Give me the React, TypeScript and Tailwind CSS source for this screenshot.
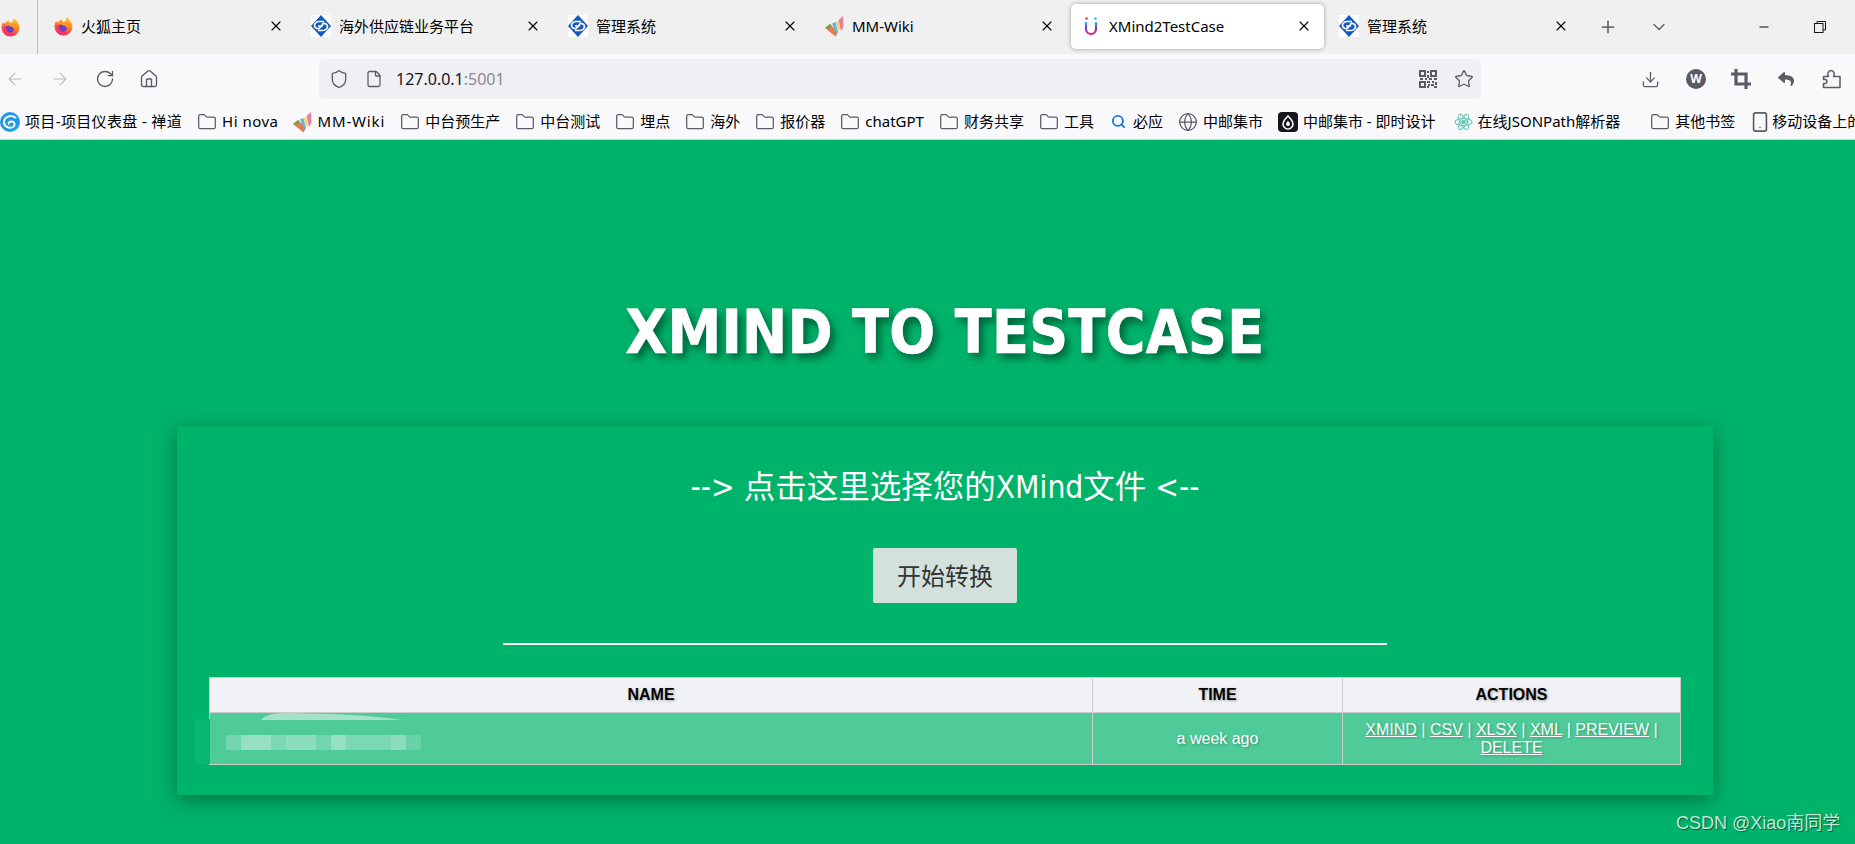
import {
  ArrowLeft,
  ArrowRight,
  ChevronDown,
  Download,
  File,
  Folder,
  Globe,
  Home,
  Minus,
  Plus,
  RotateCw,
  Search,
  Shield,
  Smartphone,
  Star,
  X,
} from "lucide-react";
import { FaReply } from "react-icons/fa";
import type { ReactNode } from "react";

function Fox({ id, size = 19 }: { id: string; size?: number }) {
  return (
    <svg width={size} height={size} viewBox="0 0 20 20" className="shrink-0">
      <defs>
        <linearGradient id={id} x1="0.7" y1="0" x2="0.3" y2="1">
          <stop offset="0" stopColor="#ffd02e" />
          <stop offset="0.4" stopColor="#ff8a22" />
          <stop offset="1" stopColor="#f0246e" />
        </linearGradient>
      </defs>
      <path d="M13 0c3 2 6 5 6.500 10a9.500 9.500 0 1 1-19 0c0-2 .6-4 1.500-5.500L4 6c1-2 2.500-3 4.500-3.500C8.500 4 9 5 10 5.500 12 5 13.500 3 13 0z" fill={`url(#${id})`} />
      <circle cx="9.500" cy="11" r="4.400" fill="#6c3bc8" />
      <path d="M5.500 8.500c1.500-1 3-1 4 .5 2 0 3.500.8 3.500 2.800 2-1.500 1.500-5-1-6.300-2.500-1-5.500 0-6.500 3z" fill="#ff9a2a" />
      <path d="M2.500 10c0 5 3.500 8 7.500 8s6-2 7-4c-2 2-5 3-8 1.500S5 12 5.500 8.500C4 8.500 3 9 2.500 10z" fill="#f4365c" />
    </svg>
  );
}

function Diamond() {
  return (
    <svg width="20" height="22" viewBox="0 0 20 22" className="shrink-0">
      <rect width="20" height="22" fill="#fff" />
      <path d="M10 0l10 11-10 11L0 11z" fill="#1458c0" />
      <path
        d="M13 6.500H8C5.500 6.500 3.500 8.500 3.500 10.500S6 14 8 13.500l2.500-2.500H7M7 15.500h5c2.500 0 4.500-2 4.500-4s-2.500-3.500-4.500-3l-1.500 3"
        fill="none"
        stroke="#fff"
        strokeWidth="1.7"
      />
    </svg>
  );
}

function MMLogo() {
  return (
    <svg width="19" height="22" viewBox="0 0 19 22" className="shrink-0">
      <path d="M0 13l5-4 8 8-2.500 4.500z" fill="#ea7a4d" />
      <path d="M0 13l5-4 1.500 1.500-3 3.500z" fill="#6da84f" />
      <path d="M7 8.500l3.500-1.500 2.500 10-2 1z" fill="#62b6e0" />
      <path d="M11 7l2-1 2 7-1.500 3.500z" fill="#f6d64a" />
      <path d="M13.500 5L18 1l.5 11-2.500 4z" fill="#e77ea6" />
    </svg>
  );
}

function Magnet() {
  return (
    <svg width="14" height="20" viewBox="0 0 14 20" className="shrink-0">
      <defs>
        <linearGradient id="mg" x1="0" y1="0" x2="0" y2="1">
          <stop offset="0" stopColor="#2ab7d8" />
          <stop offset="0.5" stopColor="#7a3bc4" />
          <stop offset="1" stopColor="#e6207f" />
        </linearGradient>
      </defs>
      <path d="M2 6v7a5 5 0 0 0 10 0V6" fill="none" stroke="url(#mg)" strokeWidth="2.2" />
      <circle cx="2.500" cy="2.500" r="1.200" fill="#e6207f" />
      <circle cx="11.500" cy="2.500" r="1.200" fill="#2ab7d8" />
    </svg>
  );
}

function Qr() {
  return (
    <svg width="18" height="18" viewBox="0 0 18 18" fill="#5b5b66">
      <path d="M0 0h7v7H0zM2 2v3h3V2zM11 0h7v7h-7zM13 2v3h3V2zM0 11h7v7H0zM2 13v3h3v-3z" fillRule="evenodd" />
      <path d="M8 1h2v2H8zM8 5h2v3H8zM1 8h3v2H1zM6 8h2v2H6zM10 8h3v2h-3zM15 8h3v2h-3zM8 11h3v2H8zM13 11h2v2h-2zM16 12h2v3h-2zM9 14h2v2H9zM12 14h3v2h-3zM8 16h2v2H8zM15 16h3v2h-3z" />
    </svg>
  );
}

function Bookmark({ icon, label, className }: { icon: ReactNode; label: string; className?: string }) {
  return (
    <div className={`flex shrink-0 items-center gap-[5px] ${className ?? ""}`}>
      {icon}
      <span className="whitespace-nowrap">{label}</span>
    </div>
  );
}

const folder = <Folder size={20} strokeWidth={1.5} className="shrink-0 text-[#5b5b66]" />;

const tabs = [
  { icon: <Fox id="fox-tab" />, label: "火狐主页" },
  { icon: <Diamond />, label: "海外供应链业务平台" },
  { icon: <Diamond />, label: "管理系统" },
  { icon: <MMLogo />, label: "MM-Wiki" },
  { icon: <Magnet />, label: "XMind2TestCase", active: true },
  { icon: <Diamond />, label: "管理系统" },
];

const bookmarks = [
  {
    icon: (
      <svg width="20" height="20" viewBox="0 0 20 20" className="shrink-0">
        <circle cx="10" cy="10" r="10" fill="#1f9be8" />
        <path d="M16 6C12 2.500 4.500 4 4 10c-.3 4.500 5 7 9 5 2.500-1.500 2-5-1-5.500-2.500-.3-4 1.500-3 3" fill="none" stroke="#fff" strokeWidth="1.900" />
      </svg>
    ),
    label: "项目-项目仪表盘 - 禅道",
    className: "tracking-[0.35px]",
  },
  { icon: folder, label: "Hi nova", className: "tracking-[0.5px]" },
  { icon: <MMLogo />, label: "MM-Wiki", className: "tracking-[0.85px]" },
  { icon: folder, label: "中台预生产" },
  { icon: folder, label: "中台测试" },
  { icon: folder, label: "埋点" },
  { icon: folder, label: "海外" },
  { icon: folder, label: "报价器" },
  { icon: folder, label: "chatGPT" },
  { icon: folder, label: "财务共享" },
  { icon: folder, label: "工具" },
  { icon: <Search size={15} strokeWidth={3} className="mx-[2px] shrink-0 text-[#1e78d2]" />, label: "必应" },
  { icon: <Globe size={20} strokeWidth={1.5} className="shrink-0 text-[#5b5b66]" />, label: "中邮集市" },
  {
    icon: (
      <svg width="20" height="20" viewBox="0 0 20 20" className="shrink-0">
        <rect width="20" height="20" rx="4" fill="#14161c" />
        <path d="M10 4c3 3 5 5 5 8a5 5 0 0 1-10 0c0-3 2-5 5-8z" fill="none" stroke="#fff" strokeWidth="1.600" />
        <path d="M10 9c1 1 2 2 2 3a2 2 0 0 1-4 0c0-1 1-2 2-3z" fill="#fff" />
      </svg>
    ),
    label: "中邮集市 - 即时设计",
  },
  {
    icon: (
      <svg width="19" height="20" viewBox="0 0 20 20" className="shrink-0" fill="none" stroke="#62c6b4" strokeWidth="1.100">
        <ellipse cx="10" cy="10" rx="9" ry="3.600" />
        <ellipse cx="10" cy="10" rx="9" ry="3.600" transform="rotate(60 10 10)" />
        <ellipse cx="10" cy="10" rx="9" ry="3.600" transform="rotate(120 10 10)" />
        <circle cx="10" cy="10" r="1.800" fill="#62c6b4" />
      </svg>
    ),
    label: "在线JSONPath解析器",
    className: "ml-[3px]",
  },
];

const mosaic = [
  "bg-white/20",
  "bg-white/40",
  "bg-white/40",
  "bg-white/25",
  "bg-white/35",
  "bg-white/35",
  "bg-white/20",
  "bg-white/40",
  "bg-white/25",
  "bg-white/25",
  "bg-white/25",
  "bg-white/35",
  "bg-white/15",
];

const shadow = "[text-shadow:1px_1px_3px_rgba(0,0,0,0.3)]";

export default function App() {
  return (
    <div className="relative flex h-screen w-full flex-col overflow-hidden bg-[#00b36a] font-['Noto_Sans','Noto_Sans_CJK_SC',sans-serif] text-[#15141a]">
      {/* tab strip */}
      <div className="flex h-[54px] shrink-0 items-center bg-[#f0f0f0] text-black">
        <div className="flex h-full w-[38px] shrink-0 items-center border-r border-[#bdbdbd] pl-px">
          <Fox id="fox-pin" />
        </div>
        <div className="ml-[3px] flex h-full shrink-0">
          {tabs.map((tab, i) => (
            <div key={i} className="flex h-full w-[257px] items-center px-[2px] pb-[2px]">
              <div
                className={
                  tab.active
                    ? "flex h-[45px] w-full items-center gap-[11px] rounded-[5px] bg-white pl-[13px] pr-[12px] shadow-[0_0_4px_rgba(0,0,0,0.35)]"
                    : "flex h-[45px] w-full items-center gap-[8px] pl-[11px] pr-[12px]"
                }
              >
                {tab.icon}
                <span className="whitespace-nowrap text-[15px]">{tab.label}</span>
                <X size={16} strokeWidth={1.7} className="ml-auto shrink-0" />
              </div>
            </div>
          ))}
        </div>
        <Plus size={20} strokeWidth={1.5} className="ml-[15px] shrink-0 text-[#3f3f46]" />
        <ChevronDown size={20} strokeWidth={1.5} className="ml-[31px] shrink-0 text-[#5b5b66]" />
        <Minus size={14} strokeWidth={1.8} className="ml-[88px] shrink-0" />
        <svg width="12" height="12" viewBox="0 0 12 12" fill="none" stroke="#15141a" className="ml-[43px] shrink-0">
          <rect x="0.5" y="2.5" width="8.5" height="9" />
          <path d="M3 2.500V.5h8.500V9H9" />
        </svg>
      </div>

      {/* toolbar */}
      <div className="flex h-[45px] shrink-0 items-center bg-[#f9f9fb] pt-[5px] text-[#5b5b66]">
        <ArrowLeft size={20} strokeWidth={1.3} className="ml-[5px] shrink-0 text-[#b9b9bf]" />
        <ArrowRight size={20} strokeWidth={1.3} className="ml-[25px] shrink-0 text-[#b9b9bf]" />
        <RotateCw size={20} strokeWidth={1.6} className="ml-[25px] shrink-0" />
        <Home size={20} strokeWidth={1.6} className="ml-[24px] shrink-0" />
        <div className="ml-[160px] flex h-[40px] w-[1162px] shrink-0 items-center rounded-[5px] bg-[#f0f0f4] pl-[10px] pr-[7px]">
          <Shield size={20} strokeWidth={1.6} className="shrink-0" />
          <File size={18} strokeWidth={1.7} className="ml-[16px] shrink-0" />
          <span className="ml-[13px] text-[16px] text-[#15141a]">
            127.0.0.1<span className="text-[#8b8b93]">:5001</span>
          </span>
          <div className="ml-auto flex items-center gap-[17px]">
            <Qr />
            <Star size={20} strokeWidth={1.6} />
          </div>
        </div>
        <Download size={19} strokeWidth={1.6} className="ml-[160px] shrink-0" />
        <div className="ml-[26px] flex h-[20px] w-[20px] shrink-0 items-center justify-center rounded-full bg-[#5b5b66] text-[12px] font-bold text-white">
          W
        </div>
        <svg width="20" height="20" viewBox="0 0 20 20" fill="none" stroke="#5b5b66" strokeWidth="3.200" className="ml-[25px] shrink-0">
          <path d="M5 0v15h15M0 5h15v15" />
        </svg>
        <FaReply size={16} className="ml-[27px] shrink-0" />
        <svg width="20" height="20" viewBox="0 0 20 20" fill="none" stroke="#5b5b66" strokeWidth="1.500" strokeLinejoin="round" className="ml-[28px] shrink-0">
          <path d="M1.500 7.500h5c-1.500-2-.5-6 2.500-6s4 4 2.500 6h6.500v11h-16.500v-4c2 .5 3.500-.5 3.500-2s-1.500-2.500-3.500-2z" />
        </svg>
      </div>

      {/* bookmarks */}
      <div className="flex h-[41px] shrink-0 items-center gap-[15px] border-b border-[#cfcfd8] bg-[#f9f9fb] pt-[5px] text-[15px] text-black">
        {bookmarks.map((b, i) => (
          <Bookmark key={i} icon={b.icon} label={b.label} className={b.className} />
        ))}
        <div className="ml-[15px] flex shrink-0 items-center gap-[14px]">
          <Bookmark icon={folder} label="其他书签" />
          <div className="flex items-center gap-[1px]">
            <Smartphone size={22} strokeWidth={1.8} className="shrink-0 text-[#5b5b66]" />
            <span className="whitespace-nowrap">移动设备上的</span>
          </div>
        </div>
      </div>

      {/* page */}
      <div className="w-[1890px] shrink-0 text-white">
        <h1 className="mt-[152px] text-center font-['DejaVu_Sans_Condensed','DejaVu_Sans',sans-serif] text-[60px] font-bold leading-[80px] tracking-[0.4px] [-webkit-text-stroke:0.7px_white] [text-shadow:4px_5px_9px_rgba(0,0,0,0.5)]">
          XMIND TO TESTCASE
        </h1>
        <div className="mx-auto mt-[54px] w-[1536px] bg-[#00b36a] px-[32px] pb-[30px] pt-[41px] shadow-[0_5px_20px_rgba(0,0,0,0.35)]">
          <p className="text-center font-['DejaVu_Sans_Condensed','Noto_Sans_CJK_SC',sans-serif] text-[31.5px] leading-[40px]">
            --&gt; 点击这里选择您的XMind文件 &lt;--
          </p>
          <div className="mt-[41px] flex justify-center">
            <button className="h-[55px] w-[144px] rounded-[2px] bg-[#d2e1dc] text-[24px] text-[#333]">开始转换</button>
          </div>
          <hr className="mx-auto mt-[40px] w-[884px] border-t-2 border-white" />
          <table className="mt-[32px] w-[1471px] table-fixed border-collapse font-['Liberation_Sans',sans-serif] text-[16px] leading-[18px]">
            <colgroup>
              <col className="w-[883px]" />
              <col className="w-[250px]" />
              <col className="w-[338px]" />
            </colgroup>
            <thead>
              <tr className={`h-[35px] bg-[#f1f2f5] font-bold text-black ${shadow}`}>
                <th className="border border-[#ccc] font-bold">NAME</th>
                <th className="border border-[#ccc] font-bold">TIME</th>
                <th className="border border-[#ccc] font-bold">ACTIONS</th>
              </tr>
            </thead>
            <tbody>
              <tr className={`h-[52px] bg-[#4fcb99] text-center text-white ${shadow}`}>
                <td className="relative border border-[#ccc]">
                  <svg width="140" height="7" viewBox="0 0 140 7" className="absolute left-[51px] top-0">
                    <path d="M0 7C6 1 12 0 30 0c40 1 80 2 110 7z" fill="#a5e2c9" />
                  </svg>
                  <div className="absolute left-[-15px] top-[6px] h-[45px] w-[15px] bg-[#09b672]" />
                  <div className="absolute left-[16px] top-[22px] flex h-[15px] w-[195px]">
                    {mosaic.map((c, i) => (
                      <div key={i} className={`h-full flex-1 ${c}`} />
                    ))}
                  </div>
                </td>
                <td className="border border-[#ccc]">a week ago</td>
                <td className="border border-[#ccc] px-[8px]">
                  <a className="underline">XMIND</a> | <a className="underline">CSV</a> | <a className="underline">XLSX</a> |{" "}
                  <a className="underline">XML</a> | <a className="underline">PREVIEW</a> | <a className="underline">DELETE</a>
                </td>
              </tr>
            </tbody>
          </table>
        </div>
      </div>

      <div className="absolute left-[1676px] top-[812px] whitespace-nowrap font-['Liberation_Sans','Noto_Sans_CJK_SC',sans-serif] text-[18px] leading-[22px] text-[#c4e6d6] [text-shadow:1px_1px_1px_rgba(0,0,0,0.45)]">
        CSDN @Xiao南同学
      </div>
    </div>
  );
}
